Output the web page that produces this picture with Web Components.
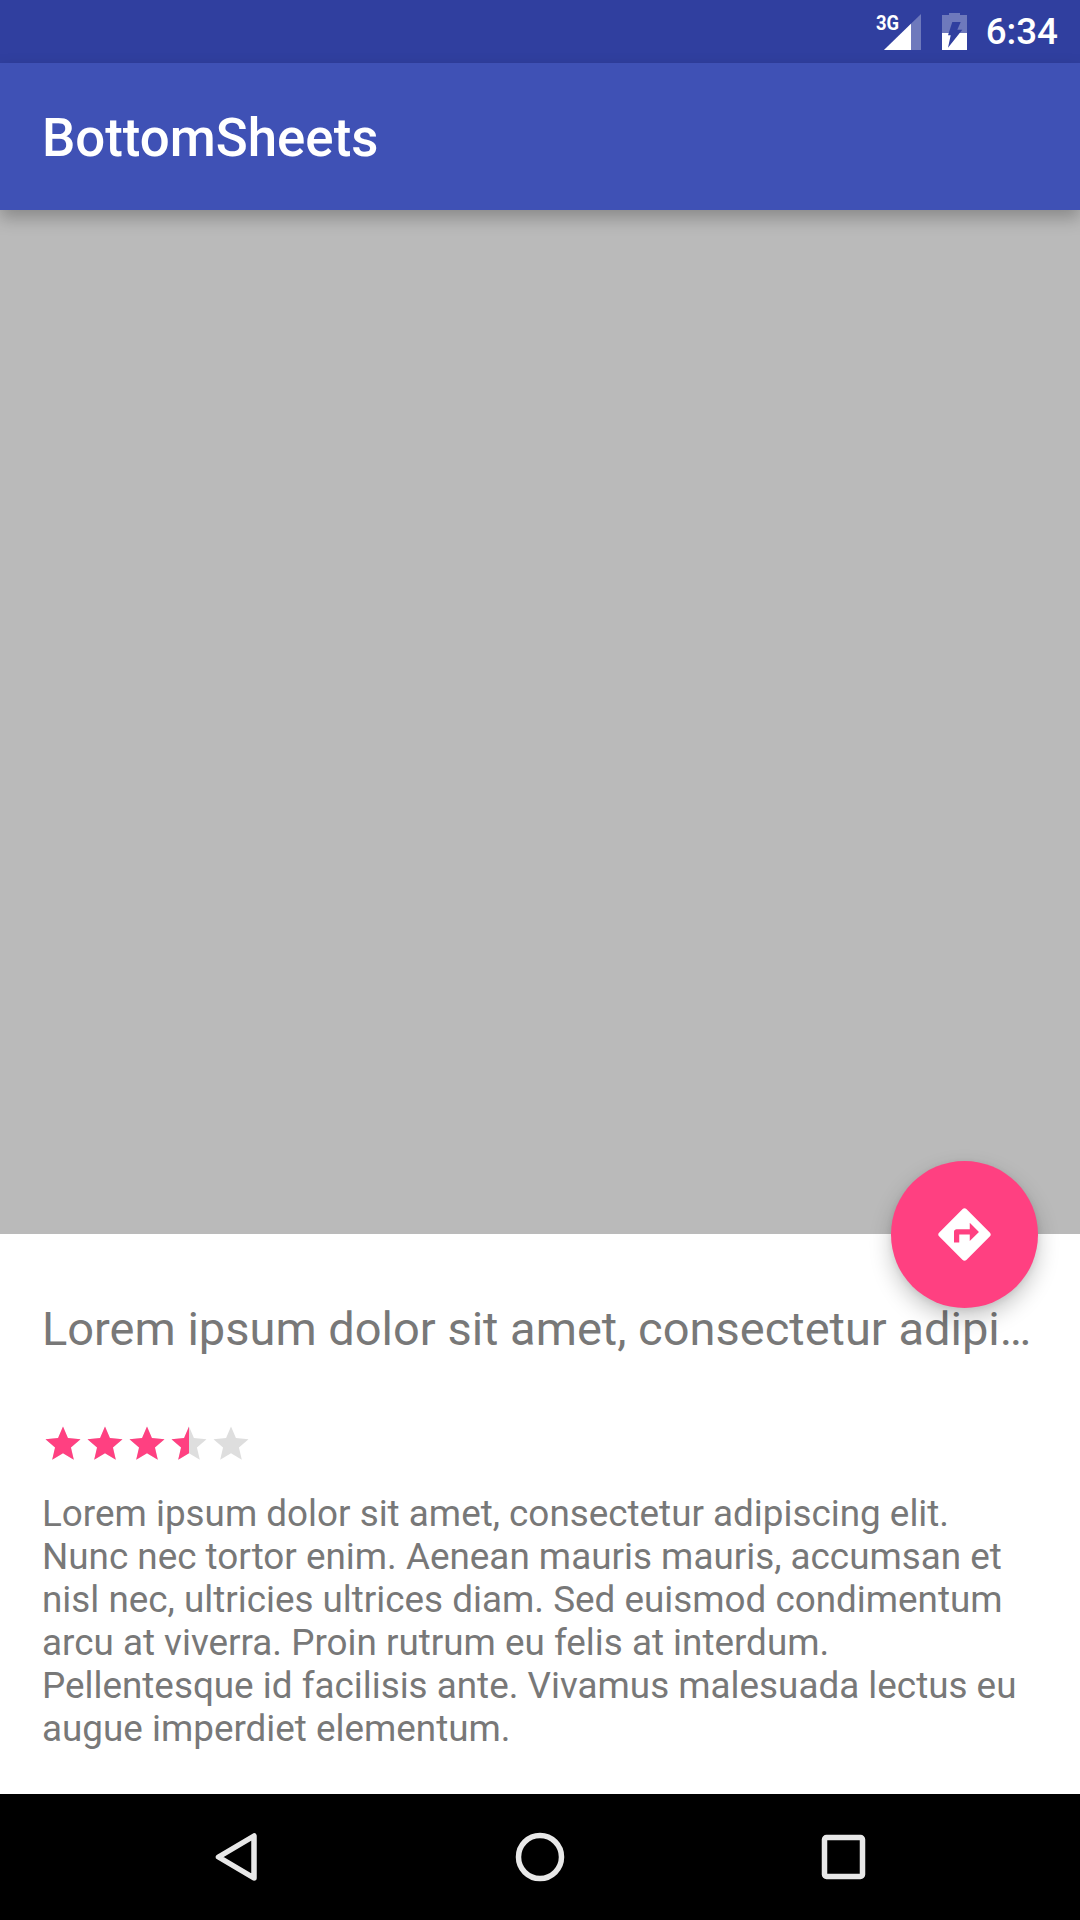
<!DOCTYPE html>
<html>
<head>
<meta charset="utf-8">
<style>
  html, body { margin: 0; padding: 0; background: #fff; }
  body { font-family: Roboto, "Liberation Sans", sans-serif; }
  #screen { display: flex; flex-direction: column; width: 1080px; height: 1920px; overflow: hidden; position: relative; }
</style>
</head>
<body>
<div id="screen">
  <status-bar time="6:34"></status-bar>
  <app-bar>BottomSheets</app-bar>
  <hero-area></hero-area>
  <detail-sheet heading="Lorem ipsum dolor sit amet, consectetur adipi…" rating="3.5">
    Lorem ipsum dolor sit amet, consectetur adipiscing elit. Nunc nec tortor enim. Aenean mauris mauris, accumsan et nisl nec, ultricies ultrices diam. Sed euismod condimentum arcu at viverra. Proin rutrum eu felis at interdum. Pellentesque id facilisis ante. Vivamus malesuada lectus eu augue imperdiet elementum.
  </detail-sheet>
  <nav-bar></nav-bar>
  <fab-button></fab-button>
</div>

<script>
class StatusBar extends HTMLElement {
  constructor() {
    super();
    this.attachShadow({mode: 'open'});
    this.shadowRoot.innerHTML = `
      <style>
        :host { display: flex; flex: none; height: 63px; background: #303f9f; color: #fff; align-items: center; justify-content: flex-end; padding-right: 22px; }
        .signal { position: relative; width: 48px; height: 38px; margin-right: 20px; }
        .signal svg { position: absolute; left: 9px; top: 0; }
        .net { position: absolute; left: 2px; top: 0; font: 700 20px/20px Roboto, sans-serif; transform: scaleX(.92); transform-origin: 0 0; }
        .battery { margin-right: 19px; display: block; }
        .time { font: 500 36.75px/43px Roboto, sans-serif; }
      </style>
      <div class="signal">
        <svg width="38" height="38" viewBox="0 0 38 38">
          <path d="M1 37 L38 1 V37 Z" fill="#fff" fill-opacity=".3"/>
          <path d="M1 37 L28 10.700 V37 Z" fill="#fff"/>
        </svg>
        <span class="net">3G</span>
      </div>
      <svg class="battery" width="25" height="38" viewBox="0 0 25 38">
        <path d="M7 0 H18 V2 H25 V37 H0 V2 H7 Z" fill="#fff" fill-opacity=".3"/>
        <path d="M0 20 H25 V37 H0 Z" fill="#fff"/>
        <path d="M10.300 9 H18.700 L15.300 16.700 H20.300 L6 34.700 L8.700 22.300 H6 Z" fill="#303f9f"/>
      </svg>
      <span class="time"></span>`;
  }
  connectedCallback() {
    this.shadowRoot.querySelector('.time').textContent = this.getAttribute('time');
  }
}

class AppBar extends HTMLElement {
  constructor() {
    super();
    this.attachShadow({mode: 'open'});
    this.shadowRoot.innerHTML = `
      <style>
        :host { display: flex; flex: none; height: 147px; background: #3f51b5; color: #fff; align-items: center; padding-left: 42px; position: relative; z-index: 2; box-shadow: 0 8px 16px rgba(0,0,0,.26); font: 500 52.8px Roboto, sans-serif; }
        span { padding-top: 2px; }
      </style>
      <span><slot></slot></span>`;
  }
}

class HeroArea extends HTMLElement {
  constructor() {
    super();
    this.attachShadow({mode: 'open'});
    this.shadowRoot.innerHTML = `
      <style>
        :host { display: block; flex: none; height: 1024px; background: #bababa; }
      </style>`;
  }
}

class StarRating extends HTMLElement {
  static get observedAttributes() {
    return ['value'];
  }
  constructor() {
    super();
    this.attachShadow({mode: 'open'});
  }
  attributeChangedCallback(attr, oldVal, newVal) {
    const rating = parseFloat(newVal);
    const star = 'M12 17.27L18.18 21l-1.64-7.03L22 9.24l-7.19-.61L12 2 9.19 8.63 2 9.24l5.46 4.73L5.82 21z';
    let html = `<style>:host { display: flex; } svg { display: block; }</style>`;
    for (let i = 0; i < 5; i++) {
      const fill = Math.max(0, Math.min(1, rating - i));
      html += `<svg width="42" height="42" viewBox="0 0 24 24">
        <clipPath id="c${i}"><rect width="${24 * fill}" height="24"/></clipPath>
        <path d="${star}" fill="#dedede"/>
        <path d="${star}" fill="#ff4081" clip-path="url(#c${i})"/>
      </svg>`;
    }
    this.shadowRoot.innerHTML = html;
  }
}

class DetailSheet extends HTMLElement {
  constructor() {
    super();
    this.attachShadow({mode: 'open'});
    this.shadowRoot.innerHTML = `
      <style>
        :host { display: flex; flex-direction: column; flex: 1; min-height: 0; background: #fff; color: #787878; padding: 0 42px; font-family: Roboto, sans-serif; }
        h2 { margin: 67px 0 0; font: 400 47px/56px Roboto, sans-serif; white-space: nowrap; }
        star-rating { margin-top: 66px; }
        p { margin: 27px 0 0; font: 400 36.85px/43px Roboto, sans-serif; }
      </style>
      <h2></h2>
      <star-rating></star-rating>
      <p><slot></slot></p>`;
  }
  connectedCallback() {
    this.shadowRoot.querySelector('h2').textContent = this.getAttribute('heading');
    this.shadowRoot.querySelector('star-rating').setAttribute('value', this.getAttribute('rating'));
  }
}

class NavBar extends HTMLElement {
  constructor() {
    super();
    this.attachShadow({mode: 'open'});
    this.shadowRoot.innerHTML = `
      <style>
        :host { display: block; flex: none; height: 126px; background: #000; }
        svg { display: block; }
      </style>
      <svg width="1080" height="126" viewBox="0 0 1080 126" fill="none" stroke="#e8e8e8" stroke-width="5.500" stroke-linejoin="round">
        <path d="M254 42 V84 L218.500 63 Z"/>
        <circle cx="540" cy="63" r="21.500"/>
        <rect x="824.500" y="43.500" width="38" height="39" rx="2"/>
      </svg>`;
  }
}

class FabButton extends HTMLElement {
  constructor() {
    super();
    this.attachShadow({mode: 'open'});
    this.shadowRoot.innerHTML = `
      <style>
        :host { position: absolute; left: 891px; top: 1161px; width: 147px; height: 147px; border-radius: 50%; background: #ff4081; display: flex; align-items: center; justify-content: center; box-shadow: 0 10px 22px rgba(0,0,0,.22), 0 2px 6px rgba(0,0,0,.08); z-index: 3; }
      </style>
      <svg width="63" height="63" viewBox="0 0 24 24" fill="#fff">
        <path d="M21.71 11.29l-9-9c-.39-.39-1.02-.39-1.41 0l-9 9c-.39.39-.39 1.02 0 1.41l9 9c.39.39 1.02.39 1.41 0l9-9c.39-.38.39-1.01 0-1.41zM14 14.5V12h-4v3H8v-4c0-.55.45-1 1-1h5V7.5l3.5 3.5-3.5 3.5z"/>
      </svg>`;
  }
}

customElements.define('status-bar', StatusBar);
customElements.define('app-bar', AppBar);
customElements.define('hero-area', HeroArea);
customElements.define('star-rating', StarRating);
customElements.define('detail-sheet', DetailSheet);
customElements.define('nav-bar', NavBar);
customElements.define('fab-button', FabButton);
</script>
</body>
</html>
